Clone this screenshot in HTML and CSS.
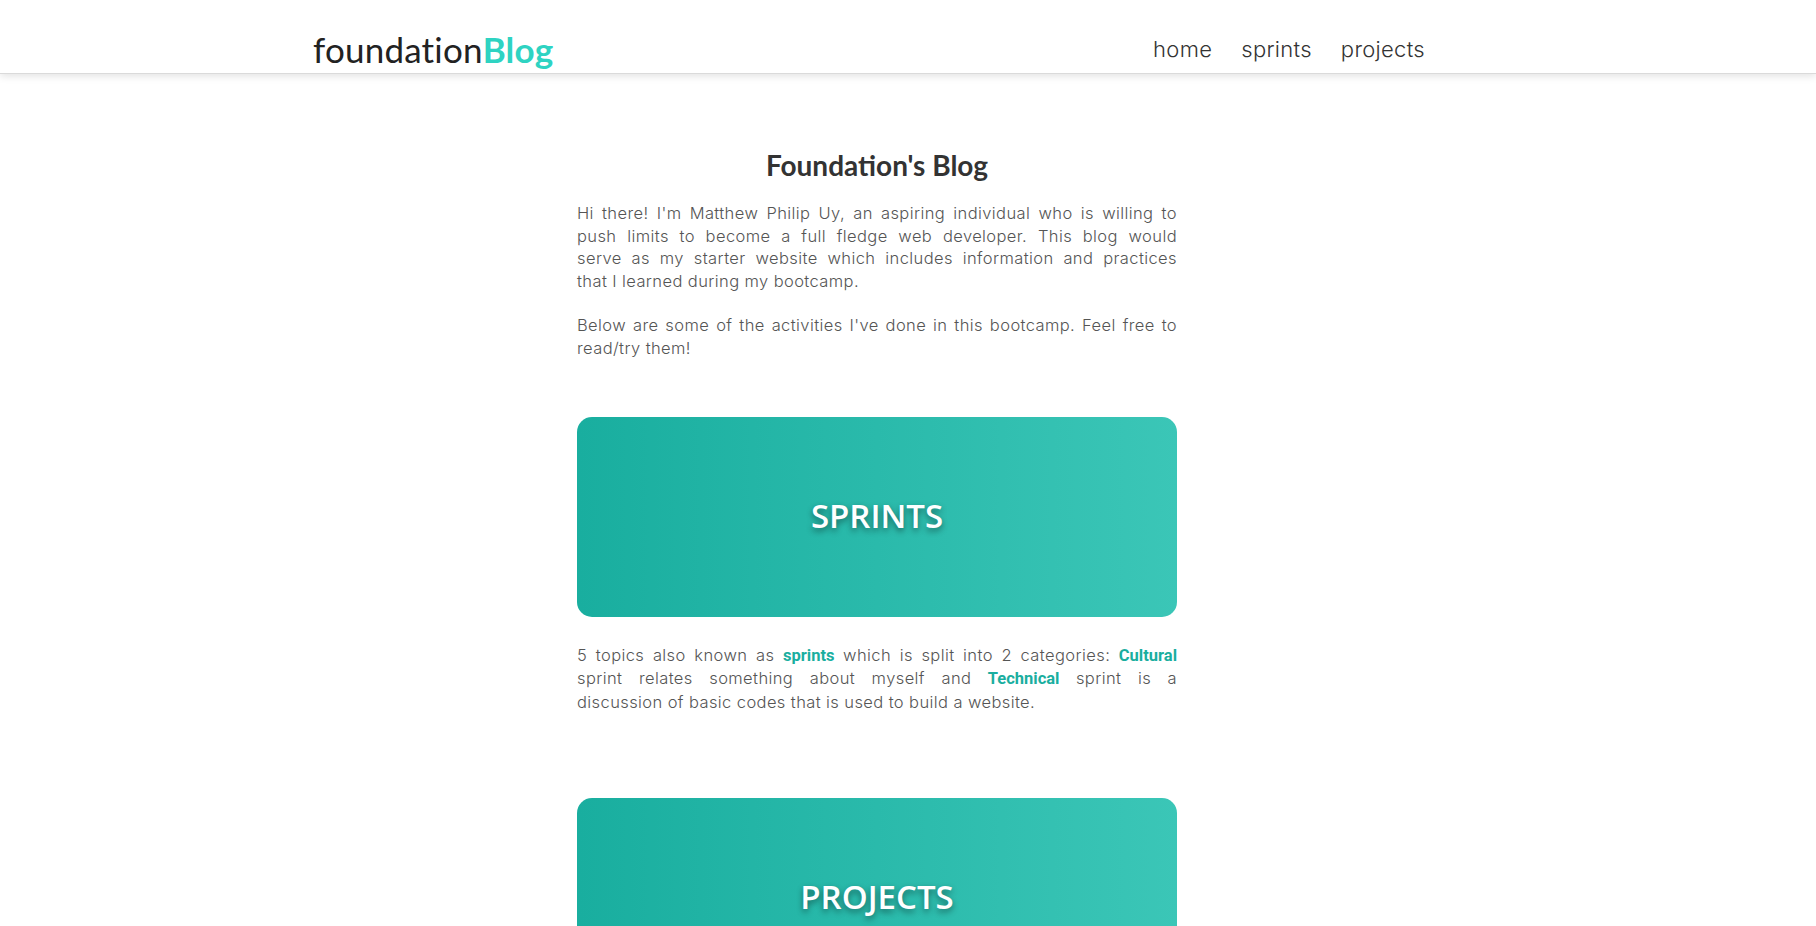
FILE: index.html
```html
<!DOCTYPE html>
<html lang="en">
<head>
<meta charset="utf-8">
<title>Foundation's Blog</title>
<link rel="stylesheet" href="styles.css">
</head>
<body>
<header class="site-header">
  <div class="header-inner">
    <a class="logo" href="#">foundation<span class="logo-accent">Blog</span></a>
    <nav class="nav">
      <a class="nav-link" href="#">home</a>
      <a class="nav-link" href="#">sprints</a>
      <a class="nav-link" href="#">projects</a>
    </nav>
  </div>
</header>
<main class="content">
  <h1 class="page-title">Foundation's Blog</h1>
  <p class="text intro">
    <span class="line">Hi there! I'm Matthew Philip Uy, an aspiring individual who is willing to</span>
    <span class="line">push limits to become a full fledge web developer. This blog would</span>
    <span class="line">serve as my starter website which includes information and practices</span>
    <span class="line last">that I learned during my bootcamp.</span>
  </p>
  <p class="text intro-last">
    <span class="line">Below are some of the activities I've done in this bootcamp. Feel free to</span>
    <span class="line last">read/try them!</span>
  </p>

  <a class="card card-first" href="#"><span class="card-label">SPRINTS</span></a>
  <p class="text card-desc">
    <span class="line">5 topics also known as <strong class="hl">sprints</strong> which is split into 2 categories: <strong class="hl">Cultural</strong></span>
    <span class="line">sprint relates something about myself and <strong class="hl">Technical</strong> sprint is a</span>
    <span class="line last">discussion of basic codes that is used to build a website.</span>
  </p>

  <a class="card" href="#"><span class="card-label">PROJECTS</span></a>
</main>
</body>
</html>
```

FILE: styles.css
```css
* { box-sizing: border-box; }
html, body { margin: 0; padding: 0; background: #fff; }
body { font-family: "Inter", "Liberation Sans", sans-serif; color: #555; }
a { text-decoration: none; }

.site-header {
  height: 74px;
  background: #fff;
  border-bottom: 1px solid #dadada;
  box-shadow: 0 2px 8px rgba(0, 0, 0, 0.12);
}
.header-inner {
  width: 1112px;
  height: 100%;
  margin-left: calc(50% - 595px);
  display: flex;
  align-items: center;
  justify-content: space-between;
  padding-top: 24px;
}
.logo {
  font-family: "Lato", "Roboto", sans-serif;
  font-size: 35px;
  color: #222;
  letter-spacing: 0.2px;
}
.logo-accent { color: #2ed3c2; font-weight: 700; }
.nav { display: flex; gap: 29px; }
.nav-link {
  font-family: "Inter", sans-serif;
  font-weight: 300;
  font-size: 22px;
  color: #333;
  letter-spacing: 0.3px;
}

.content {
  width: 600px;
  margin-left: calc(50% - 331px);
  padding-top: 75px;
}
.page-title {
  margin: 0;
  height: 32px;
  line-height: 32px;
  text-align: center;
  font-family: "Lato", "Roboto", sans-serif;
  font-weight: 700;
  font-size: 28px;
  color: #333;
}
.text {
  margin: 0;
  font-size: 16.5px;
  font-weight: 300;
  line-height: 22.6px;
  color: #555;
  letter-spacing: 0.4px;
}
.line {
  display: block;
  white-space: nowrap;
  text-align: justify;
  text-align-last: justify;
}
.line.last { text-align-last: left; }
.intro { margin-top: 21px; }
.intro-last { margin-top: 22px; }
.hl { font-family: "Roboto", sans-serif; font-weight: 700; color: #1aae9f; letter-spacing: 0; }

.card {
  display: flex;
  align-items: center;
  justify-content: center;
  height: 200px;
  border-radius: 15px;
  background: linear-gradient(to right, #19ae9f, #3bc6b7);
}
.card-first { margin-top: 57px; }
.card-label {
  font-family: "Open Sans", sans-serif;
  font-weight: 600;
  font-size: 33px;
  color: #fff;
  text-shadow: 0 3px 6px rgba(0, 0, 0, 0.45);
  padding-bottom: 3px;
}
.card-desc { margin-top: 27px; margin-bottom: 85px; }
```
